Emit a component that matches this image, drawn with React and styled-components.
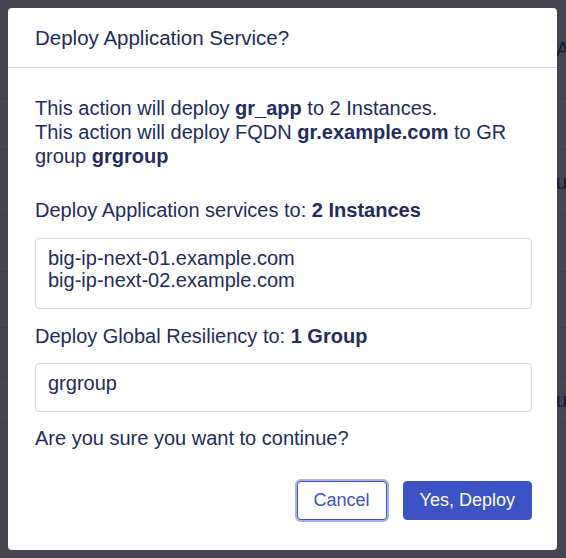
import React from "react";
import styled, { createGlobalStyle } from "styled-components";

const GlobalStyle = createGlobalStyle`
  html, body {
    margin: 0;
    padding: 0;
    width: 566px;
    height: 558px;
    overflow: hidden;
    font-family: "Liberation Sans", Arial, sans-serif;
  }
  * {
    box-sizing: border-box;
  }
`;

// page that sits behind the dimmed overlay
const Page = styled.div`
  width: 566px;
  height: 558px;
  background: #ffffff;
  color: #222c5e;
  font-size: 20px;
`;

const PageRow = styled.div`
  display: grid;
  grid-template-columns: 556px 1fr;
  height: ${props => props.height}px;
  border-bottom: 1px solid #d8dbe6;
  align-items: center;
  white-space: nowrap;
  overflow: hidden;
`;

const Overlay = styled.div`
  position: fixed;
  inset: 0;
  background: rgba(23, 23, 35, 0.8);
  padding: 8px;
`;

const Modal = styled.div`
  width: 549px;
  background: #ffffff;
  border-radius: 4px;
  color: #222c5e;
  font-size: 20px;
  line-height: 24px;
`;

const Header = styled.div`
  padding: 18px 27px 17px;
  border-bottom: 1px solid #d5d9e6;
`;

const Title = styled.h2`
  margin: 0;
  font-size: 20.5px;
  font-weight: 400;
  line-height: 24px;
  color: #1f2a5c;
`;

const Body = styled.div`
  display: flex;
  flex-direction: column;
  padding: 28px 25px 30px 27px;
`;

const Text = styled.p`
  margin: 0 0 ${props => props.gap || 0}px;
`;

const List = styled.div`
  margin-bottom: ${props => props.gap || 0}px;
  padding: 8px 12px 17px;
  border: 1px solid #d3d7e6;
  border-radius: 4px;
  line-height: 22px;
`;

const Footer = styled.div`
  display: flex;
  justify-content: flex-end;
  align-items: center;
  gap: 16px;
`;

const Button = styled.button`
  height: 39px;
  padding: 0 16px;
  border-radius: 4px;
  font-family: inherit;
  font-size: 18px;
  border: 1px solid #3b53c4;
  background: ${props => (props.primary ? "#3b53c4" : "#ffffff")};
  color: ${props => (props.primary ? "#ffffff" : "#3b53c4")};
  box-shadow: ${props =>
    props.focused ? "0 0 0 2px rgba(59, 83, 196, 0.45)" : "none"};
  cursor: pointer;
`;

const App = () => {
  return (
    <>
      <GlobalStyle />
      <Page>
        <PageRow height={99}>
          <span />
          <span>Actions</span>
        </PageRow>
        <PageRow height={51} />
        <PageRow height={65}>
          <span />
          <span>up</span>
        </PageRow>
        <PageRow height={57} />
        <PageRow height={56} />
        <PageRow height={50} />
        <PageRow height={45}>
          <span />
          <span>up</span>
        </PageRow>
      </Page>
      <Overlay>
        <Modal role="dialog">
          <Header>
            <Title>Deploy Application Service?</Title>
          </Header>
          <Body>
            <Text gap={30}>
              This action will deploy <b>gr_app</b> to 2 Instances.
              <br />
              This action will deploy FQDN <b>gr.example.com</b> to GR group{" "}
              <b>grgroup</b>
            </Text>
            <Text gap={16}>
              Deploy Application services to: <b>2 Instances</b>
            </Text>
            <List gap={15}>
              big-ip-next-01.example.com
              <br />
              big-ip-next-02.example.com
            </List>
            <Text gap={15}>
              Deploy Global Resiliency to: <b>1 Group</b>
            </Text>
            <List gap={14}>grgroup</List>
            <Text gap={31}>Are you sure you want to continue?</Text>
            <Footer>
              <Button focused>Cancel</Button>
              <Button primary>Yes, Deploy</Button>
            </Footer>
          </Body>
        </Modal>
      </Overlay>
    </>
  );
};

export default App;
